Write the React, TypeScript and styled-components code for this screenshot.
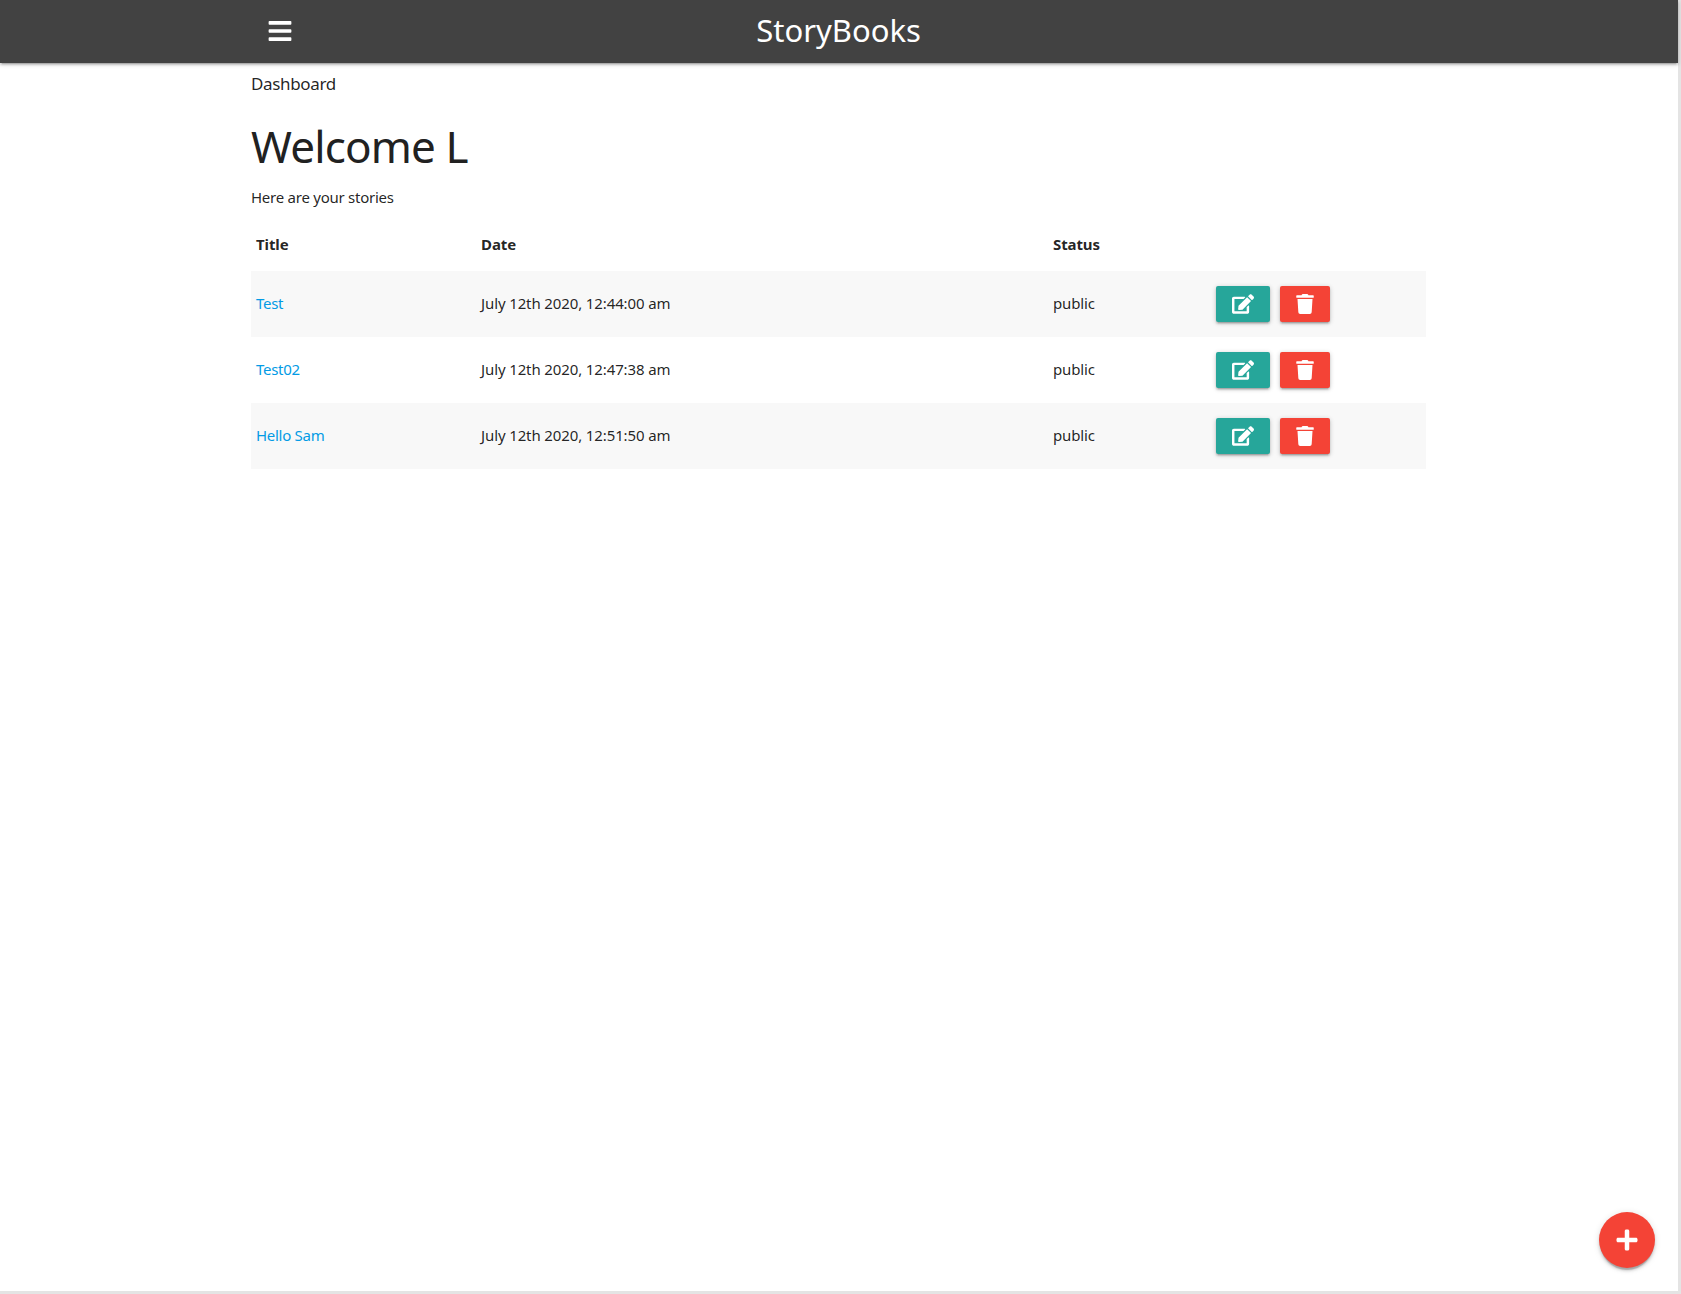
import React from "react";
import styled, { createGlobalStyle } from "styled-components";
import { FaBars, FaEdit, FaPlus, FaTrash } from "react-icons/fa";

const Global = createGlobalStyle`
  html, body { margin: 0; padding: 0; height: 100%; overflow: hidden; background: #e4e4e4; }
  body { font-family: "Noto Sans", "Open Sans", sans-serif; color: rgba(0,0,0,0.87); }
`;

const Page = styled.div`
  position: relative;
  width: 1678px;
  height: 1291px;
  background: #fff;
`;

const Nav = styled.nav`
  height: 63px;
  background: #424242;
  box-shadow: 0 2px 2px 0 rgba(0,0,0,.14), 0 3px 1px -2px rgba(0,0,0,.12), 0 1px 5px 0 rgba(0,0,0,.2);
  position: relative;
`;

const NavInner = styled.div`
  width: 1175px;
  height: 100%;
  margin-left: 251px;
  padding-bottom: 2px;
  box-sizing: border-box;
  display: flex;
  align-items: center;
  position: relative;
`;

const MenuButton = styled.a`
  display: flex;
  margin-left: 16px;
  color: #fff;
  font-size: 26px;
`;

const Brand = styled.a`
  position: absolute;
  left: 50%;
  transform: translateX(-50%);
  color: #fff;
  font-size: 31px;
  line-height: 61px;
`;

const Container = styled.main`
  width: 1175px;
  margin-left: 251px;
`;

const Crumb = styled.div`
  font-size: 17px;
  line-height: 24px;
  letter-spacing: -0.35px;
  margin-top: 9px;
`;

const Heading = styled.h3`
  font-size: 44px;
  font-weight: 400;
  line-height: 60px;
  letter-spacing: -0.85px;
  margin: 20px 0 0;
  color: #212121;
`;

const Lead = styled.p`
  font-size: 15px;
  line-height: 22px;
  letter-spacing: -0.25px;
  margin: 10px 0 0;
`;

const Table = styled.table`
  width: 1175px;
  table-layout: fixed;
  border-collapse: collapse;
  margin-top: 8px;
  font-size: 15px;
`;

const HeadCell = styled.th`
  text-align: left;
  padding: 0 5px;
  height: 55px;
  font-weight: 700;
  letter-spacing: -0.1px;
`;

const Row = styled.tr`
  height: 66px;
  &:nth-child(odd) { background: #f8f8f8; }
`;

const Cell = styled.td`
  padding: 0 5px 2px;
  letter-spacing: -0.12px;
`;

const ActionCell = styled.td`
  padding: 0 5px;
`;

const StoryLink = styled.a`
  color: #039be5;
  text-decoration: none;
  letter-spacing: -0.28px;
`;

const Actions = styled.div`
  display: flex;
  gap: 10px;
`;

const ActionButton = styled.a<{ $bg: string; $w: number; $icon: number }>`
  display: flex;
  align-items: center;
  justify-content: center;
  width: ${(p) => p.$w}px;
  height: 36px;
  background: ${(p) => p.$bg};
  color: #fff;
  border-radius: 2px;
  font-size: ${(p) => p.$icon}px;
  box-shadow: 0 2px 2px 0 rgba(0,0,0,.14), 0 3px 1px -2px rgba(0,0,0,.12), 0 1px 5px 0 rgba(0,0,0,.2);
`;

const Fab = styled.a`
  position: absolute;
  left: 1599px;
  top: 1212px;
  width: 56px;
  height: 56px;
  border-radius: 50%;
  background: #f44336;
  color: #fff;
  display: flex;
  align-items: center;
  justify-content: center;
  font-size: 24px;
  box-shadow: 0 3px 3px 0 rgba(0,0,0,.14), 0 1px 7px 0 rgba(0,0,0,.12), 0 3px 1px -1px rgba(0,0,0,.2);
`;

const stories = [
  { title: "Test", date: "July 12th 2020, 12:44:00 am" },
  { title: "Test02", date: "July 12th 2020, 12:47:38 am" },
  { title: "Hello Sam", date: "July 12th 2020, 12:51:50 am" },
];

export default function App() {
  return (
    <Page>
      <Global />
      <Nav>
        <NavInner>
          <MenuButton><FaBars /></MenuButton>
          <Brand>StoryBooks</Brand>
        </NavInner>
      </Nav>
      <Container>
        <Crumb>Dashboard</Crumb>
        <Heading>Welcome L</Heading>
        <Lead>Here are your stories</Lead>
        <Table>
          <colgroup>
            <col width={225} />
            <col width={572} />
            <col width={163} />
            <col />
          </colgroup>
          <thead>
            <tr>
              <HeadCell>Title</HeadCell>
              <HeadCell>Date</HeadCell>
              <HeadCell>Status</HeadCell>
              <HeadCell />
            </tr>
          </thead>
          <tbody>
            {stories.map((s) => (
              <Row key={s.title}>
                <Cell><StoryLink>{s.title}</StoryLink></Cell>
                <Cell>{s.date}</Cell>
                <Cell>public</Cell>
                <ActionCell>
                  <Actions>
                    <ActionButton $bg="#26a69a" $w={54} $icon={22}><FaEdit /></ActionButton>
                    <ActionButton $bg="#f44336" $w={50} $icon={20}><FaTrash /></ActionButton>
                  </Actions>
                </ActionCell>
              </Row>
            ))}
          </tbody>
        </Table>
      </Container>
      <Fab><FaPlus /></Fab>
    </Page>
  );
}
